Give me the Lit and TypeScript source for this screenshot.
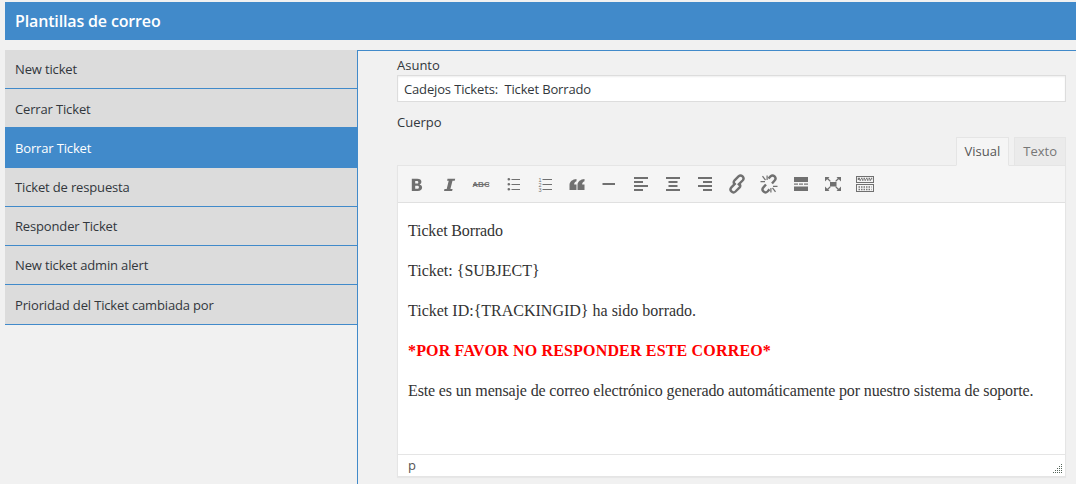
import { LitElement, html, css, svg } from 'lit';
import { customElement } from 'lit/decorators.js';

const LINK = svg`<g fill="none" stroke="#707070" stroke-width="2.4"><path d="M8.6 9.2 4.4 13.4a2.9 2.9 0 0 0 4.1 4.1l3.9-3.9a2.9 2.9 0 0 0 0-3.900"/><path d="M10.900 11.200 15.600 6.500a2.900 2.900 0 0 0-4.100-4.100L7.600 6.300a2.900 2.900 0 0 0 0 3.900"/></g>`;

const UNLINK = svg`<g fill="none" stroke="#707070" stroke-width="2.400"><path d="M7 10.500 4.400 13.400a2.900 2.900 0 0 0 4.100 4.100l2-2.100"/><path d="M13 9.500l2.600-3a2.900 2.900 0 0 0-4.100-4.100l-2 2.100"/></g><path d="M3 2.500l1-.8 3 4-1 .8zM1.500 7h4.500v1.200H1.500zM7.500 1.500h1.200V6H7.500zM17 17.500l-1 .8-3-4 1-.8zM18.500 13H14v-1.200h4.500zM12.500 18.500h-1.200V14h1.200z"/>`;

const ICONS = [
  svg`<path d="M4.800 4.700h5.500c2.600 0 4.100 1.200 4.100 3.100 0 1.300-.7 2.300-1.900 2.700 1.600.3 2.600 1.500 2.600 3.100 0 2.200-1.700 3.400-4.400 3.400H4.800V4.700zm3.400 2.400v2.500h1.600c1 0 1.500-.4 1.500-1.200s-.5-1.300-1.500-1.300H8.200zm0 4.700v2.900h2c1.100 0 1.700-.5 1.700-1.500s-.6-1.400-1.700-1.400h-2z"/>`,
  svg`<path d="M8.500 4.700H16.200l-.5 2h-2.200L11.400 15h2.200l-.5 2H5l.5-2h2.200L9.700 6.700H8.100l.4-2z"/>`,
  svg`<text x="10" y="13.300" text-anchor="middle" font-size="8" font-weight="700" font-family="Liberation Sans, sans-serif">ABC</text><rect x="2" y="10" width="16" height="1"/>`,
  svg`<rect x="4.500" y="4" width="2.600" height="2.600" rx="1.300"/><rect x="4.500" y="9" width="2.600" height="2.600" rx="1.300"/><rect x="4.500" y="14" width="2.600" height="2.600" rx="1.300"/><rect x="8.500" y="5" width="8.500" height="1"/><rect x="8.500" y="10" width="8.500" height="1"/><rect x="8.500" y="15" width="8.500" height="1"/>`,
  svg`<text x="5" y="7.500" text-anchor="middle" font-size="5.500" font-family="Liberation Sans, sans-serif">1</text><text x="5" y="12.500" text-anchor="middle" font-size="5.500" font-family="Liberation Sans, sans-serif">2</text><text x="5" y="17.500" text-anchor="middle" font-size="5.500" font-family="Liberation Sans, sans-serif">3</text><rect x="7.500" y="5" width="9.500" height="1"/><rect x="7.500" y="10" width="9.500" height="1"/><rect x="7.500" y="15" width="9.500" height="1"/>`,
  svg`<path d="M9.500 5v2.300C8 7.900 7.200 9 7.200 10.400h2.300V16H2.500v-5C2.500 7.700 5.500 5.300 9.500 5zm8 0v2.300c-1.500.6-2.300 1.700-2.300 3.100h2.300V16h-7v-5c0-3.300 3-5.700 7-6z"/>`,
  svg`<rect x="3.500" y="9" width="12.500" height="2"/>`,
  svg`<rect x="3" y="3" width="14" height="2"/><rect x="3" y="7" width="9" height="2"/><rect x="3" y="11" width="14" height="2"/><rect x="3" y="15" width="9" height="2"/>`,
  svg`<rect x="3" y="3" width="14" height="2"/><rect x="5.500" y="7" width="9" height="2"/><rect x="5.500" y="11" width="9" height="2"/><rect x="3" y="15" width="14" height="2"/>`,
  svg`<rect x="3" y="3" width="14" height="2"/><rect x="8" y="7" width="9" height="2"/><rect x="3" y="11" width="14" height="2"/><rect x="8" y="15" width="9" height="2"/>`,
  LINK,
  UNLINK,
  svg`<rect x="3" y="3" width="14" height="5"/><rect x="3" y="9.500" width="4" height="1.200"/><rect x="8" y="9.500" width="4" height="1.200"/><rect x="13" y="9.500" width="4" height="1.200"/><rect x="3" y="12.500" width="14" height="4.500"/>`,
  svg`<rect x="7" y="8" width="6.500" height="4.500"/><path d="M2 3h4.500L5.300 4.200 7.800 7 7 7.800 4.200 5.300 2 7.500zM18 3v4.500L15.800 5.300 13 7.800 12.200 7l2.500-2.800L13.500 3zM2 17v-4.500l2.200 2.200L7 12.200l.8.800-2.500 2.800L6.500 17zM18 17h-4.500l1.200-1.200L12.200 13l.8-.8 2.800 2.500L18 12.500z"/>`,
  svg`<path fill-rule="evenodd" d="M1 2h18v7H1zm1 1v5h16V3zM1 10h18v8H1zm1 1v6h16v-6z"/><path d="M3.500 4.500h13v1.500h-13z" fill="none" stroke="#777" stroke-width="1.500" stroke-dasharray="1.500 1"/><path d="M3.500 13h13M3.500 15.500h13" fill="none" stroke="#777" stroke-width="1.500" stroke-dasharray="1.500 1"/>`,
];

const TEMPLATES = [
  'New ticket',
  'Cerrar Ticket',
  'Borrar Ticket',
  'Ticket de respuesta',
  'Responder Ticket',
  'New ticket admin alert',
  'Prioridad del Ticket cambiada por',
];

@customElement('app-root')
export class AppRoot extends LitElement {
  static styles = css`
    :host {
      display: block;
      height: 484px;
      overflow: hidden;
      background: #f1f1f1;
      padding: 2px 0 0 5px;
      box-sizing: border-box;
      font-family: 'Open Sans', sans-serif;
      font-size: 13px;
      color: #32373c;
    }
    .title {
      height: 38px;
      line-height: 38px;
      padding-left: 10px;
      margin-bottom: 10px;
      background: #418aca;
      color: #fff;
      font-size: 16px;
      font-weight: 600;
      letter-spacing: -0.15px;
    }
    .cols {
      display: flex;
      align-items: flex-start;
    }
    .side {
      width: 352px;
      flex: none;
    }
    .item {
      box-sizing: border-box;
      height: 39.22px;
      line-height: 18px;
      padding: 10.35px 0 0 10px;
      background: #dcdcdc;
      border-bottom: 1px solid #418aca;
      letter-spacing: -0.15px;
    }
    .item.active {
      background: #418aca;
      color: #fff;
    }
    .panel {
      flex: 1;
      height: 434px;
      box-sizing: border-box;
      border-left: 1px solid #418aca;
      border-top: 1px solid #418aca;
      padding: 5px 10px 0 39px;
    }
    .label {
      height: 18px;
      line-height: 18px;
    }
    .subject {
      box-sizing: border-box;
      height: 27px;
      line-height: 26px;
      margin: 1px 0 11px;
      padding-left: 6px;
      background: #fff;
      border: 1px solid #ddd;
      box-shadow: inset 0 1px 2px rgba(0, 0, 0, 0.07);
      letter-spacing: -0.15px;
    }
    .tabs {
      display: flex;
      justify-content: flex-end;
      gap: 5px;
      height: 28px;
      margin-top: 6px;
    }
    .tab {
      position: relative;
      box-sizing: border-box;
      height: 29px;
      line-height: 27px;
      padding: 0 8px;
      border: 1px solid #e5e5e5;
      background: #ebebeb;
      color: #777;
    }
    .tab.on {
      background: #f5f5f5;
      border-bottom-color: #f5f5f5;
      color: #555;
      z-index: 1;
    }
    .editor {
      background: #fff;
      border: 1px solid #e5e5e5;
      box-shadow: 0 1px 1px rgba(0, 0, 0, 0.04);
    }
    .toolbar {
      display: flex;
      align-items: center;
      gap: 12px;
      height: 36px;
      padding-left: 9px;
      background: #f5f5f5;
      border-bottom: 1px solid #e0e0e0;
    }
    .toolbar svg {
      display: block;
      width: 20px;
      height: 20px;
      fill: #707070;
      flex: none;
    }
    .content {
      height: 251px;
      box-sizing: border-box;
      padding: 16px 10px 0;
      font-family: 'Liberation Serif', serif;
      font-size: 16px;
      line-height: 24px;
      color: #333;
    }
    .content p {
      margin: 0 0 16px;
    }
    .narrow {
      letter-spacing: -0.14px;
    }
    .warn {
      color: #f00;
      font-weight: 700;
      letter-spacing: 0.17px;
    }
    .status {
      position: relative;
      height: 21px;
      line-height: 21px;
      padding-left: 10px;
      border-top: 1px solid #e5e5e5;
      color: #555;
    }
    .grip {
      position: absolute;
      right: 3px;
      bottom: 3px;
      display: block;
      width: 9px;
      height: 9px;
      fill: #55655a;
    }
  `;

  render() {
    return html`
      <div class="title">Plantillas de correo</div>
      <div class="cols">
        <div class="side">
          ${TEMPLATES.map(
            (name, i) => html`<div class="item ${i === 2 ? 'active' : ''}">${name}</div>`
          )}
        </div>
        <div class="panel">
          <div class="label">Asunto</div>
          <div class="subject">Cadejos Tickets:&nbsp; Ticket Borrado</div>
          <div class="label">Cuerpo</div>
          <div class="tabs">
            <div class="tab on">Visual</div>
            <div class="tab">Texto</div>
          </div>
          <div class="editor">
            <div class="toolbar">
              ${ICONS.map((icon) => html`<svg viewBox="0 0 20 20">${icon}</svg>`)}
            </div>
            <div class="content">
              <p class="narrow">Ticket Borrado</p>
              <p>Ticket: {SUBJECT}</p>
              <p>Ticket ID:{TRACKINGID} ha sido borrado.</p>
              <p class="warn">*POR FAVOR NO RESPONDER ESTE CORREO*</p>
              <p class="narrow">Este es un mensaje de correo electrónico generado automáticamente por nuestro sistema de soporte.</p>
            </div>
            <div class="status">
              p
              <svg class="grip" viewBox="0 0 9 9">
                <path d="M8 0h1v1H8zM6 2h1v1H6zM8 2h1v1H8zM4 4h1v1H4zM6 4h1v1H6zM8 4h1v1H8zM2 6h1v1H2zM4 6h1v1H4zM6 6h1v1H6zM8 6h1v1H8zM0 8h1v1H0zM2 8h1v1H2zM4 8h1v1H4zM6 8h1v1H6zM8 8h1v1H8z" />
              </svg>
            </div>
          </div>
        </div>
      </div>
    `;
  }
}
